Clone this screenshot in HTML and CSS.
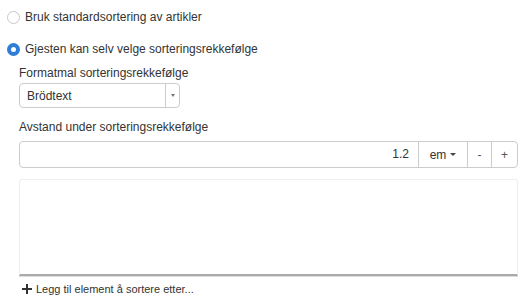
FILE: index.html
```html
<!DOCTYPE html>
<html>
<head>
<meta charset="utf-8">
<link rel="stylesheet" href="styles.css">
</head>
<body>
<div class="page">
  <label class="radio-row first">
    <span class="radio"></span>
    <span class="radio-label">Bruk standardsortering av artikler</span>
  </label>
  <label class="radio-row second">
    <span class="radio checked"></span>
    <span class="radio-label">Gjesten kan selv velge sorteringsrekkefølge</span>
  </label>
  <div class="options">
    <div class="field-label">Formatmal sorteringsrekkefølge</div>
    <div class="select">
      <span class="select-text">Brödtext</span>
      <span class="select-arrow"><span class="caret small"></span></span>
    </div>
    <div class="field-label second-label">Avstand under sorteringsrekkefølge</div>
    <div class="input-group">
      <div class="input-value">1.2</div>
      <div class="addon unit">em<span class="caret"></span></div>
      <div class="addon btn">-</div>
      <div class="addon btn">+</div>
    </div>
    <div class="list-box"></div>
    <div class="add-row">
      <svg class="plus" width="10" height="10" viewBox="0 0 10 10"><path d="M4 0h2v4h4v2H6v4H4V6H0V4h4z" fill="#333"/></svg>
      <span>Legg til element å sortere etter...</span>
    </div>
  </div>
</div>
</body>
</html>
```

FILE: styles.css
```css
html, body {
  margin: 0;
  padding: 0;
  background: #fff;
}
body {
  font-family: "Liberation Sans", Arial, Helvetica, sans-serif;
  font-size: 12px;
  color: #333;
}
.page {
  padding-left: 7px;
  padding-right: 7px;
}
.radio-row {
  display: flex;
  align-items: center;
  height: 16px;
}
.radio-row.first {
  margin-top: 9px;
}
.radio-row.second {
  margin-top: 16px;
}
.radio {
  box-sizing: border-box;
  width: 13px;
  height: 13px;
  border: 1px solid #c8c8c8;
  border-radius: 50%;
  margin-right: 5px;
  background: #fff;
  flex-shrink: 0;
}
.radio.checked {
  border: 4px solid #2e7dd8;
  background: #fff;
}
.options {
  padding-left: 12px;
}
.field-label {
  margin-top: 8px;
  height: 16px;
  line-height: 16px;
}
.second-label {
  margin-top: 11px;
}
.select {
  margin-top: 2px;
  width: 161px;
  height: 25px;
  box-sizing: border-box;
  border: 1px solid #ccc;
  border-radius: 4px;
  display: flex;
  align-items: center;
}
.select-text {
  flex: 1;
  padding-left: 7px;
}
.select-arrow {
  width: 13px;
  height: 100%;
  border-left: 1px solid #ccc;
  display: flex;
  align-items: center;
  justify-content: center;
}
.caret {
  display: inline-block;
  width: 0;
  height: 0;
  border-left: 3px solid transparent;
  border-right: 3px solid transparent;
  border-top: 3.5px solid #444;
  vertical-align: middle;
  margin-left: 4px;
}
.caret.small {
  border-left-width: 2.5px;
  border-right-width: 2.5px;
  border-top-width: 3px;
  border-top-color: #777;
  margin-left: 0;
}
.input-group {
  margin-top: 6px;
  height: 27px;
  box-sizing: border-box;
  border: 1px solid #ccc;
  border-radius: 4px;
  display: flex;
}
.input-value {
  flex: 1;
  text-align: right;
  line-height: 25px;
  padding-right: 9px;
}
.addon {
  border-left: 1px solid #ccc;
  display: flex;
  align-items: center;
  justify-content: center;
}
.addon.unit {
  width: 48px;
}
.addon.btn {
  width: 23px;
  color: #555;
}
.addon.btn:last-child {
  width: 25px;
}
.list-box {
  margin-top: 11px;
  height: 97px;
  box-sizing: border-box;
  border: 1px solid #eee;
  border-bottom: 2px solid #aaa;
  border-radius: 3px 3px 0 0;
  box-shadow: 0 1px 0 #ddd;
}
.add-row {
  margin-top: 6px;
  display: flex;
  align-items: center;
  height: 14px;
  padding-left: 3px;
  font-size: 11px;
}
.plus {
  margin-right: 4px;
}
```
